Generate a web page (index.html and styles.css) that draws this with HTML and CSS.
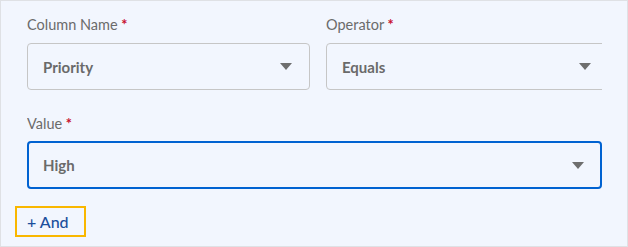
FILE: index.html
```html
<!DOCTYPE html>
<html>
<head>
<meta charset="utf-8">
<link rel="stylesheet" href="styles.css">
</head>
<body>
<div class="panel">
  <div class="rows">
    <div class="row">
      <div class="field half">
        <div class="label">Column Name <span class="req">*</span></div>
        <div class="select">
          <span class="value">Priority</span>
          <span class="caret"></span>
        </div>
      </div>
      <div class="field half">
        <div class="label">Operator <span class="req">*</span></div>
        <div class="select">
          <span class="value">Equals</span>
          <span class="caret"></span>
        </div>
      </div>
    </div>
    <div class="row second">
      <div class="field full">
        <div class="label">Value <span class="req">*</span></div>
        <div class="select active">
          <span class="value">High</span>
          <span class="caret"></span>
        </div>
      </div>
    </div>
  </div>
  <button class="and-btn">+ And</button>
</div>
</body>
</html>
```
FILE: styles.css
```css
* { box-sizing: border-box; }
html, body { margin: 0; padding: 0; background: #f2f6fe; }
body { font-family: Lato, "Noto Sans", sans-serif; }
.panel {
  width: 628px;
  height: 247px;
  border: 1px solid #dfe1e5;
  background: #f2f6fe;
  padding: 15px 0 0 26px;
}
.rows {
  width: 575px;
  overflow: hidden;
}
.row {
  display: flex;
  gap: 16px;
}
.row.second { margin-top: 25px; }
.field { flex: none; }
.field.half { width: 283px; }
.field.full { width: 575px; }
.label {
  font-size: 14.5px;
  line-height: 18px;
  color: #6b6b6b;
  margin-bottom: 9px;
  white-space: nowrap;
}
.row.second .label { margin-bottom: 8px; }
.req { color: #c8102e; font-weight: 700; }
.select {
  height: 47px;
  border: 1px solid #c6c6c6;
  border-radius: 4px;
  display: flex;
  align-items: center;
  justify-content: space-between;
  padding: 0 17px 0 15px;
}
.select.active {
  height: 48px;
  border: 2px solid #0062d1;
  padding: 0 16px 0 14px;
}
.value {
  font-size: 15px;
  font-weight: 700;
  color: #6a6a6a;
}
.caret {
  width: 0;
  height: 0;
  border-left: 6px solid transparent;
  border-right: 6px solid transparent;
  border-top: 7px solid #6e6e6e;
}
.and-btn {
  display: block;
  margin: 17px 0 0 -12px;
  height: 31px;
  width: 71px;
  border: 2px solid #f9b700;
  background: transparent;
  padding: 0 0 0 10px;
  text-align: left;
  font-family: Lato, "Noto Sans", sans-serif;
  font-size: 16px;
  color: #1b4f9c;
  font-weight: 500;
}
```
